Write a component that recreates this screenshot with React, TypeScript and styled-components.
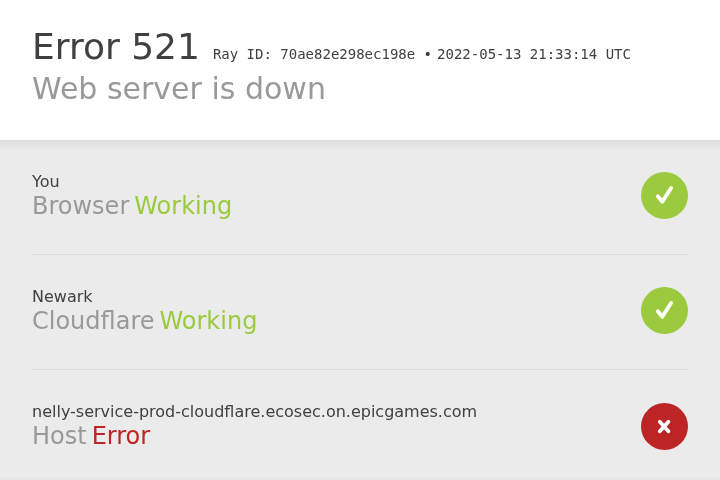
import React from "react";
import styled, { createGlobalStyle } from "styled-components";

const GlobalStyle = createGlobalStyle`
  * { box-sizing: border-box; }
  body { margin: 0; background: #fff; overflow: hidden; }
  h1, h2, h3, p { margin: 0; font-weight: 400; }
`;

const Page = styled.main`
  height: 480px;
  overflow: hidden;
  will-change: transform;
  font-family: "DejaVu Sans", sans-serif;
  font-size: 16px;
  line-height: 24px;
  color: #404040;
`;

const Header = styled.header`
  height: 140px;
  padding: 24px 32px 0;
`;

const TitleRow = styled.div`
  display: flex;
  align-items: baseline;
  white-space: nowrap;
`;

const Title = styled.h1`
  font-size: 36px;
  line-height: 45px;
  margin-right: 13px;
`;

const Meta = styled.span`
  font-family: "DejaVu Sans Mono", monospace;
  font-size: 14px;
  line-height: 21px;
  margin-right: 5px;
`;

const Subtitle = styled.h2`
  font-size: 30px;
  line-height: 39px;
  color: #999;
`;

const Panel = styled.section`
  height: 346px;
  padding: 0 32px;
  background: linear-gradient(to bottom, #dedede, #ebebeb 3%, #ebebeb 97%, #dedede);
`;

const Row = styled.div`
  display: flex;
  justify-content: space-between;
  height: 115px;
  padding-top: 30px;
  border-bottom: 1px solid #dcdcdc;
  &:last-child { border-bottom: 0; }
`;

const Place = styled.p`
  line-height: 24px;
`;

const Status = styled.h3`
  display: flex;
  gap: 5px;
  font-size: 24px;
  line-height: 24px;
  color: #999;
`;

const State = styled.span<{ $error?: boolean }>`
  color: ${(p) => (p.$error ? "#bd2426" : "#9bca3e")};
`;

const Badge = styled.div<{ $error?: boolean }>`
  width: 47px;
  height: 47px;
  margin-top: ${(p) => (p.$error ? "3px" : "2px")};
  border-radius: 50%;
  background: ${(p) => (p.$error ? "#bd2426" : "#9bca3e")};
  svg { display: block; }
`;

const items = [
  { place: "You", name: "Browser", state: "Working" },
  { place: "Newark", name: "Cloudflare", state: "Working" },
  { place: "nelly-service-prod-cloudflare.ecosec.on.epicgames.com", name: "Host", state: "Error", error: true },
];

export default function App() {
  return (
    <Page>
      <GlobalStyle />
      <Header>
        <TitleRow>
          <Title>Error 521</Title>
          <Meta>Ray ID: 70ae82e298ec198e •</Meta>
          <Meta>2022-05-13 21:33:14 UTC</Meta>
        </TitleRow>
        <Subtitle>Web server is down</Subtitle>
      </Header>
      <Panel>
        {items.map((item) => (
          <Row key={item.place}>
            <div>
              <Place>{item.place}</Place>
              <Status>
                {item.name}
                <State $error={item.error}>{item.state}</State>
              </Status>
            </div>
            <Badge $error={item.error}>
              <svg width="47" height="47" fill="none" stroke="#fff" strokeWidth="3.8" strokeLinecap="round" strokeLinejoin="round">
                <path d={item.error ? "M18.8 18.7 27.4 28.3M27.4 18.7 18.8 28.3" : "M16.8 24.2 21.3 29.8 30.1 15.9"} />
              </svg>
            </Badge>
          </Row>
        ))}
      </Panel>
    </Page>
  );
}
